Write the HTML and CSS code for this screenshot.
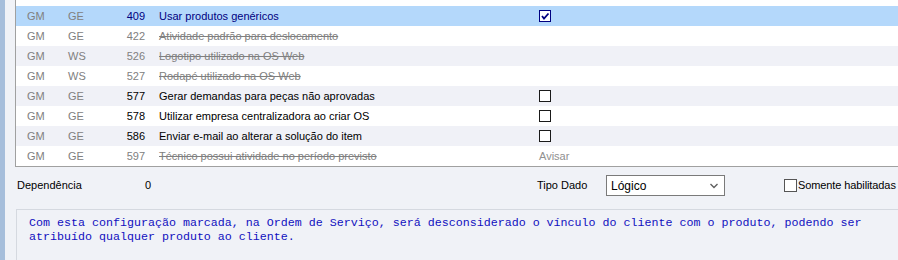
FILE: index.html
```html
<!DOCTYPE html>
<html lang="pt-BR">
<head>
    <meta charset="UTF-8">
    <title>Configurações</title>
    <link rel="stylesheet" href="styles.css">
</head>
<body>
    <div class="screen">
        <div class="side-strip"></div>
        <div class="main">
            <div class="grid">
                <div class="grid-top"></div>
                <div class="row selected">
                    <span class="cell">GM</span>
                    <span class="cell">GE</span>
                    <span class="cell num">409</span>
                    <span class="cell desc">Usar produtos genéricos</span>
                    <span class="cell"><span class="check checked"><svg viewBox="0 0 10 10" width="10" height="10"><path d="M2 5 L4 7.5 L8.5 2.5" fill="none" stroke="#000080" stroke-width="1.8"/></svg></span></span>
                </div>
                <div class="row off">
                    <span class="cell">GM</span>
                    <span class="cell">GE</span>
                    <span class="cell num">422</span>
                    <span class="cell desc">Atividade padrão para deslocamento</span>
                    <span class="cell"></span>
                </div>
                <div class="row off alt">
                    <span class="cell">GM</span>
                    <span class="cell">WS</span>
                    <span class="cell num">526</span>
                    <span class="cell desc">Logotipo utilizado na OS Web</span>
                    <span class="cell"></span>
                </div>
                <div class="row off">
                    <span class="cell">GM</span>
                    <span class="cell">WS</span>
                    <span class="cell num">527</span>
                    <span class="cell desc">Rodapé utilizado na OS Web</span>
                    <span class="cell"></span>
                </div>
                <div class="row alt">
                    <span class="cell">GM</span>
                    <span class="cell">GE</span>
                    <span class="cell num">577</span>
                    <span class="cell desc">Gerar demandas para peças não aprovadas</span>
                    <span class="cell"><span class="check"></span></span>
                </div>
                <div class="row">
                    <span class="cell">GM</span>
                    <span class="cell">GE</span>
                    <span class="cell num">578</span>
                    <span class="cell desc">Utilizar empresa centralizadora ao criar OS</span>
                    <span class="cell"><span class="check"></span></span>
                </div>
                <div class="row alt">
                    <span class="cell">GM</span>
                    <span class="cell">GE</span>
                    <span class="cell num">586</span>
                    <span class="cell desc">Enviar e-mail ao alterar a solução do item</span>
                    <span class="cell"><span class="check"></span></span>
                </div>
                <div class="row off">
                    <span class="cell">GM</span>
                    <span class="cell">GE</span>
                    <span class="cell num">597</span>
                    <span class="cell desc">Técnico possui atividade no período previsto</span>
                    <span class="cell value">Avisar</span>
                </div>
            </div>

            <div class="filters">
                <span class="dep-label">Dependência</span>
                <span class="dep-value">0</span>
                <span class="type-label">Tipo Dado</span>
                <div class="select">
                    <span>Lógico</span>
                    <svg viewBox="0 0 8 6" width="8" height="6"><path d="M0.5 1 L4 4.5 L7.5 1" fill="none" stroke="#606060" stroke-width="1.4"/></svg>
                </div>
                <label class="only-enabled"><span class="check plain"></span>Somente habilitadas</label>
            </div>

            <div class="memo">Com esta configuração marcada, na Ordem de Serviço, será desconsiderado o vínculo do cliente com o produto, podendo ser
atribuído qualquer produto ao cliente.</div>
        </div>
    </div>
</body>
</html>
```

FILE: styles.css
```css
:root {
    --page-bg: #f0f2f7;
    --strip-bg: #a6bedb;
    --row-alt: #f0f1f7;
    --row-selected: #b4d8fb;
    --text-dim: #808080;
    --text-selected: #000080;
    --memo-text: #1010c0;
}

body {
    margin: 0;
    padding: 0;
    background: var(--page-bg);
    font-family: 'Liberation Sans', Arial, sans-serif;
    font-size: 11px;
    color: #000;
}

.screen {
    display: flex;
    width: 898px;
    height: 260px;
    overflow: hidden;
}

.side-strip {
    width: 5px;
    flex: none;
    background: var(--strip-bg);
}

.main {
    flex: 1;
    padding-left: 10px;
    display: flex;
    flex-direction: column;
}

.grid {
    background: #fff;
    border-left: 1px solid #a0a0a0;
    border-bottom: 1px solid #a0a0a0;
}

.grid-top {
    height: 6px;
}

.row {
    display: grid;
    grid-template-columns: 41px 40px 37px 394px 1fr;
    height: 20px;
    line-height: 20px;
    padding-left: 11px;
    color: #000;
}

.row .cell:nth-child(1),
.row .cell:nth-child(2) {
    color: var(--text-dim);
}

.row .desc {
    padding-left: 14px;
    white-space: nowrap;
}

.num {
    text-align: right;
}

.row.alt {
    background: var(--row-alt);
}

.row.selected {
    background: var(--row-selected);
    color: var(--text-selected);
}

.row.off .num,
.row.off .desc {
    color: var(--text-dim);
}

.row.off .desc {
    text-decoration: line-through;
}

.value {
    color: #909090;
}

.check {
    display: inline-block;
    box-sizing: border-box;
    width: 12px;
    height: 12px;
    border: 1px solid #1a1a1a;
    background: #fff;
    vertical-align: -2px;
    position: relative;
}

.check.checked {
    border-color: var(--text-selected);
}

.check svg {
    position: absolute;
    left: 0;
    top: 0;
}

.filters {
    display: flex;
    align-items: flex-start;
    height: 42px;
    padding-left: 2px;
    padding-top: 8px;
    box-sizing: border-box;
    line-height: 21px;
    white-space: nowrap;
}

.filters > * {
    flex: none;
}

.dep-label {
    width: 128px;
}

.dep-value {
    width: 392px;
}

.type-label {
    width: 69px;
}

.select {
    box-sizing: border-box;
    width: 119px;
    height: 21px;
    border: 1px solid #7a7a7a;
    background: #fff;
    display: flex;
    align-items: center;
    justify-content: space-between;
    padding: 1px 6px 0 4px;
    font-size: 12px;
}

.only-enabled {
    margin-left: 59px;
    display: flex;
    align-items: center;
    height: 21px;
    font-size: 11px;
    letter-spacing: -0.1px;
}

.check.plain {
    width: 13px;
    height: 13px;
    border-color: #555;
    margin-right: 1px;
}

.memo {
    flex: 1;
    margin-left: 1px;
    border-top: 1px solid #d5d9e0;
    border-left: 1px solid #d5d9e0;
    padding: 6px 0 0 12px;
    font-family: 'Liberation Mono', 'Courier New', monospace;
    font-size: 11.67px;
    line-height: 14px;
    color: var(--memo-text);
    white-space: pre;
}
```
